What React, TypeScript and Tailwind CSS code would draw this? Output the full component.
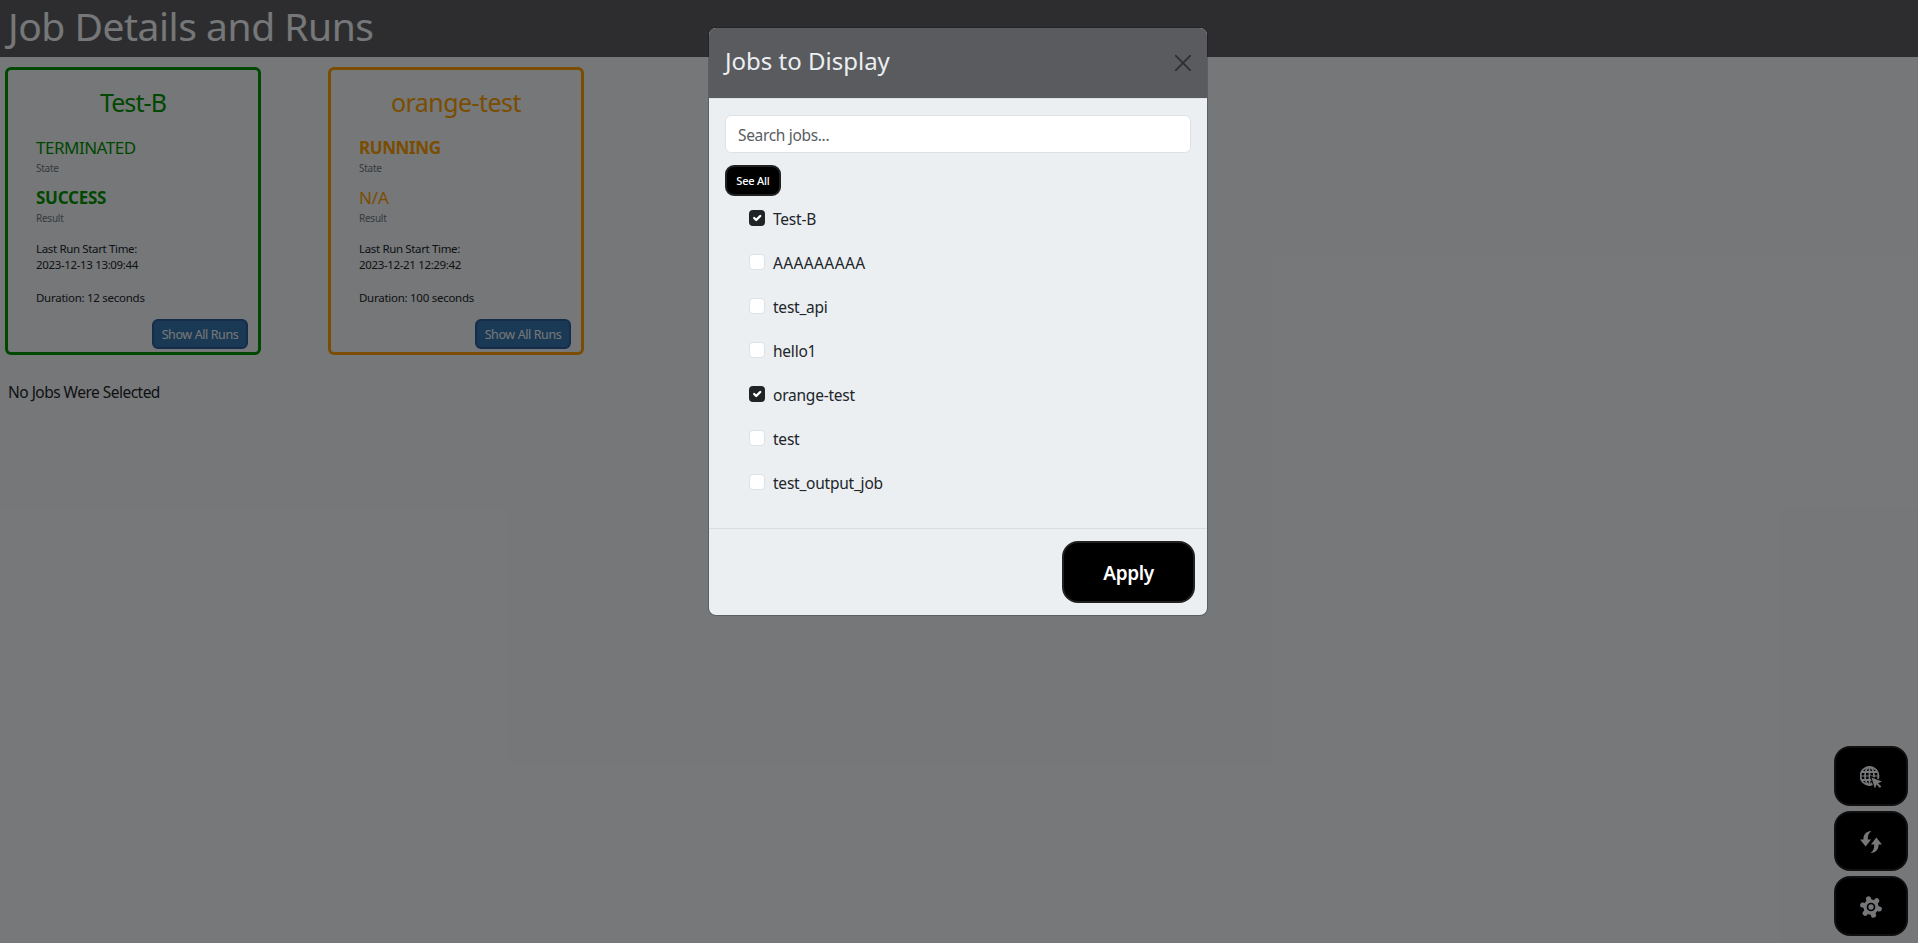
import { useState } from "react";

type Job = {
  name: string;
  state: string;
  result: string;
  start: string;
  duration: string;
  tone: "green" | "orange";
};

const jobs: Job[] = [
  { name: "Test-B", state: "TERMINATED", result: "SUCCESS", start: "2023-12-13 13:09:44", duration: "12 seconds", tone: "green" },
  { name: "orange-test", state: "RUNNING", result: "N/A", start: "2023-12-21 12:29:42", duration: "100 seconds", tone: "orange" },
];

const jobNames = ["Test-B", "AAAAAAAAA", "test_api", "hello1", "orange-test", "test", "test_output_job"];

const tones = {
  green: "border-[#009000] text-[#009000]",
  orange: "border-[#f59a00] text-[#f59a00]",
};

function JobCard({ job }: { job: Job }) {
  const running = job.tone === "orange";
  return (
    <article className={`flex h-[288px] w-64 flex-col rounded-md border-3 pt-[15px] ${tones[job.tone]}`}>
      <h2 className={`text-center text-[25px] leading-[35px] ${running ? "tracking-[-0.55px]" : "tracking-[-0.9px]"}`}>{job.name}</h2>
      <div className="mt-4 pl-7">
        <p className={running ? "text-[17px] leading-6 font-bold tracking-[-0.4px]" : "text-[17px] leading-6 tracking-[-0.5px]"}>{job.state}</p>
        <p className="text-[10px] leading-[17px] tracking-[-0.25px] text-[#6c757d]">State</p>
        <p className={running ? "mt-[9px] text-[17px] leading-6 tracking-[-0.1px]" : "mt-[9px] text-[17px] leading-6 font-bold tracking-[-0.25px]"}>{job.result}</p>
        <p className="text-[10px] leading-[17px] tracking-[-0.25px] text-[#6c757d]">Result</p>
        <div className="mt-[14px] text-[11.5px] leading-4 tracking-[-0.35px] text-[#212529]">
          <p>Last Run Start Time:</p>
          <p>{job.start}</p>
          <p className="mt-[17px] tracking-[-0.27px]">Duration: {job.duration}</p>
        </div>
      </div>
      <button className="mt-auto mr-[10px] mb-[3px] h-[30px] w-24 self-end rounded-md border-2 border-[#2a5a94] bg-[#3572a8] pt-0.5 text-[12.5px] leading-none tracking-[-0.4px] whitespace-nowrap text-[#ebeff2]">
        Show All Runs
      </button>
    </article>
  );
}

function GlobeIcon() {
  return (
    <svg viewBox="0 0 22 22" className="size-[22px]" fill="none" stroke="currentColor" strokeWidth="1.800">
      <circle cx="9.500" cy="10" r="9" />
      <ellipse cx="9.500" cy="10" rx="4.500" ry="9" />
      <path d="M9.500 1v18M1.500 6h16M1.500 14h16" />
      <path d="M.5 10h18" strokeWidth="1.100" />
      <path d="M11.500 11.500l10.500 4-4 1.700 3.300 3.300-1.400 1.400-3.300-3.300-1.700 4z" fill="#000" stroke="#000" strokeWidth="2" />
      <path d="M11.500 11.500l10.500 4-4 1.700 3.300 3.300-1.400 1.400-3.300-3.300-1.700 4z" fill="currentColor" stroke="none" />
    </svg>
  );
}

function RefreshIcon() {
  return (
    <svg viewBox="0 0 22 22" className="size-[22px]" fill="currentColor">
      <path d="M11.400 0C6 .4 3.400 3.500 3.400 8.500H0L5.700 15.500 11 8.500H7.800C7.600 4.800 8.600 2 11.400 0z" />
      <path d="M10.600 22C16 21.600 18.600 18.500 18.600 13.500H22L16.300 6.500 11 13.500H14.200C14.400 17.200 13.400 20 10.600 22z" />
    </svg>
  );
}

function GearIcon() {
  return (
    <svg viewBox="0 0 22 22" className="size-[22px]" fill="currentColor">
      <g transform="rotate(-17 11 11)">
        <circle cx="11" cy="11" r="7.600" />
        {[0, 60, 120, 180, 240, 300].map((angle) => (
          <path key={angle} transform={`rotate(${angle} 11 11)`} d="M7.200 5.500Q9 4.500 8.400 2.500A2.600 2.600 0 0 1 13.600 2.500Q13 4.500 14.800 5.500z" />
        ))}
      </g>
      <circle cx="11" cy="11" r="3.500" fill="none" stroke="#000" strokeWidth="1.700" />
    </svg>
  );
}

function CheckBox({ checked }: { checked: boolean }) {
  return checked ? (
    <span className="flex size-4 items-center justify-center rounded-[4px] bg-[#212424]">
      <svg viewBox="0 0 20 20" className="size-4" fill="none" stroke="#fff" strokeWidth="3" strokeLinecap="round" strokeLinejoin="round">
        <path d="m6.500 10 2.500 2.500 5-5" />
      </svg>
    </span>
  ) : (
    <span className="size-4 rounded-[4px] border border-[#dee2e6] bg-white" />
  );
}

export default function App() {
  const [selected, setSelected] = useState<string[]>(["Test-B", "orange-test"]);
  const toggle = (name: string) =>
    setSelected((s) => (s.includes(name) ? s.filter((n) => n !== name) : [...s, name]));

  return (
    <div className="relative h-[943px] overflow-hidden bg-[#ebeff2] font-['Noto_Sans','Open_Sans',sans-serif] text-[#212529]">
      <header className="h-[57px] bg-[#5a5b5f] pl-2">
        <h1 className="text-[39px] leading-[51px] tracking-[-0.47px] text-[#ebeff2]">Job Details and Runs</h1>
      </header>
      <main>
        <section className="flex gap-[67px] pt-[10px] pl-[5px]">
          {jobs.map((job) => (
            <JobCard key={job.name} job={job} />
          ))}
        </section>
        <p className="mt-[25px] pl-2 text-[15.5px] leading-6 tracking-[-0.52px]">No Jobs Were Selected</p>
      </main>
      <nav className="absolute right-[10px] bottom-[7px] flex flex-col gap-[5px] text-[#ebeff2]">
        {[GlobeIcon, RefreshIcon, GearIcon].map((Icon, i) => (
          <button key={i} className="flex h-[60px] w-[74px] items-center justify-center rounded-2xl border-2 border-[#212121] bg-black pt-0.5">
            <Icon />
          </button>
        ))}
      </nav>

      <div className="absolute inset-0 flex items-start justify-center bg-black/50 pt-[27px] pr-0.5">
        <div className="w-[500px] rounded-lg border border-black/20 bg-[#ebeff2] bg-clip-padding">
          <div className="flex h-[71px] items-start justify-between rounded-t-[7px] border-b border-[#dee2e6] bg-[#5a5b5f] px-4">
            <h2 className="mt-[15px] text-[24px] leading-9 text-[#ebeff2]">Jobs to Display</h2>
            <svg viewBox="0 0 16 16" className="mt-[27px] size-4 text-[#2d2e30]" stroke="currentColor" strokeWidth="1.700" strokeLinecap="round">
              <path d="M.7.7l14.600 14.600M15.300.7L.7 15.300" />
            </svg>
          </div>
          <div className="h-[429px] px-4 pt-4">
            <input
              placeholder="Search jobs..."
              className="block h-[38px] w-full rounded-md border border-[#dee2e6] bg-white px-3 pt-[2px] text-[15.5px] tracking-[-0.33px] placeholder:text-[#595c5f]"
            />
            <button className="mt-3 block h-[31px] w-14 rounded-[9px] border-2 border-[#212121] bg-black text-[11px] leading-none font-medium tracking-[-0.2px] whitespace-nowrap text-white">
              See All
            </button>
            <ul className="mt-[10px] flex flex-col gap-5 pl-6">
              {jobNames.map((name) => (
                <li key={name} className="flex h-6 cursor-pointer gap-2 pt-1" onClick={() => toggle(name)}>
                  <CheckBox checked={selected.includes(name)} />
                  <span className={`text-[15.5px] leading-[19px] ${name === name.toUpperCase() ? "tracking-[0.37px]" : "tracking-[-0.23px]"}`}>{name}</span>
                </li>
              ))}
            </ul>
          </div>
          <div className="flex h-[87px] justify-end border-t border-[#d9dde0] pt-3 pr-3">
            <button className="h-[62px] w-[133px] rounded-2xl border-2 border-[#212121] bg-black pt-[3px] text-[19px] font-semibold tracking-[-0.4px] text-white">Apply</button>
          </div>
        </div>
      </div>
    </div>
  );
}
